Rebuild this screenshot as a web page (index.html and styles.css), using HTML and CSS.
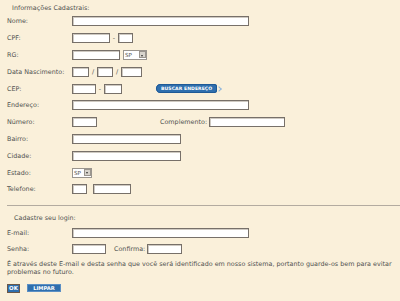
FILE: index.html
```html
<!DOCTYPE html>
<html lang="pt">
<head>
<meta charset="utf-8">
<link rel="stylesheet" href="styles.css">
</head>
<body>
<div class="page">
  <div class="section-title">Informações Cadastrais:</div>
  <div class="row"><span class="lbl">Nome:</span><span class="inp w177"></span></div>
  <div class="row"><span class="lbl">CPF:</span><span class="inp w38"></span><span class="sep">-</span><span class="inp w15"></span></div>
  <div class="row"><span class="lbl">RG:</span><span class="inp w48"></span><span class="sel sel-rg"><span class="sel-txt">SP</span><span class="sel-btn"></span></span></div>
  <div class="row"><span class="lbl">Data Nascimento:</span><span class="inp w17"></span><span class="sep">/</span><span class="inp w16"></span><span class="sep">/</span><span class="inp w21"></span></div>
  <div class="row"><span class="lbl">CEP:</span><span class="inp w24"></span><span class="sep sep-wide">-</span><span class="inp w18"></span><span class="btn-busca"><span class="btn-busca-body">BUSCAR ENDEREÇO</span><span class="btn-busca-arrow"></span></span></div>
  <div class="row"><span class="lbl">Endereço:</span><span class="inp w177"></span></div>
  <div class="row"><span class="lbl">Número:</span><span class="inp w25"></span><span class="lbl-inline lbl-compl">Complemento:</span><span class="inp w76"></span></div>
  <div class="row"><span class="lbl">Bairro:</span><span class="inp w109"></span></div>
  <div class="row"><span class="lbl">Cidade:</span><span class="inp w109"></span></div>
  <div class="row"><span class="lbl">Estado:</span><span class="sel sel-uf"><span class="sel-txt">SP</span><span class="sel-btn"></span></span></div>
  <div class="row"><span class="lbl">Telefone:</span><span class="inp w15"></span><span class="inp w38 ml6"></span></div>
  <div class="rule"></div>
  <div class="section-title login-title">Cadastre seu login:</div>
  <div class="row"><span class="lbl">E-mail:</span><span class="inp w177"></span></div>
  <div class="row"><span class="lbl">Senha:</span><span class="inp w34"></span><span class="lbl-inline lbl-conf">Confirma:</span><span class="inp w35"></span></div>
  <p class="note">É através deste E-mail e desta senha que você será identificado em nosso sistema, portanto guarde-os bem para evitar problemas no futuro.</p>
  <div class="actions"><span class="btn-ok">OK</span><span class="btn-limpar">LIMPAR</span></div>
</div>
</body>
</html>
```
FILE: styles.css
```css
html, body {
  margin: 0;
  padding: 0;
  background: #faf0da;
}
body {
  width: 400px;
  height: 301px;
  overflow: hidden;
  font-family: "DejaVu Sans", Verdana, sans-serif;
  font-size: 6.4px;
  color: #505050;
}
.page {
  padding: 3px 0 0 7px;
}
.section-title {
  padding-left: 5px;
  height: 10px;
  line-height: 10px;
}
.row {
  display: flex;
  align-items: center;
  height: 16.8px;
}
.lbl {
  width: 65px;
  flex: none;
}
.inp {
  display: inline-block;
  box-sizing: border-box;
  height: 10px;
  background: #fff;
  border: 1px solid #777069;
  box-shadow: inset 1px 1px 0 #cfcac2;
  flex: none;
}
.w177 { width: 177px; }
.w109 { width: 109px; }
.w76 { width: 76px; }
.w48 { width: 48px; }
.w38 { width: 38px; }
.w35 { width: 35px; }
.w34 { width: 34px; }
.w25 { width: 25px; }
.w24 { width: 24px; }
.w21 { width: 21px; }
.w18 { width: 18px; }
.w17 { width: 17px; }
.w16 { width: 16px; }
.w15 { width: 15px; }
.ml6 { margin-left: 6px; }
.sep {
  width: 8px;
  text-align: center;
  flex: none;
}
.sep-wide { width: 8px; }
.sel {
  display: inline-flex;
  align-items: center;
  box-sizing: border-box;
  height: 10px;
  background: #fff;
  border: 1px solid #9a958e;
  flex: none;
}
.sel-rg { width: 24px; margin-left: 3px; }
.sel-uf { width: 20px; }
.sel-txt {
  flex: 1;
  padding-left: 1px;
  font-size: 5.6px;
  line-height: 8px;
}
.sel-btn {
  width: 7px;
  height: 7px;
  margin-right: 0.5px;
  background: #d8d4cc;
  border: 0.5px solid #9a958e;
  box-sizing: border-box;
  position: relative;
}
.sel-btn::after {
  content: "";
  position: absolute;
  left: 1.5px;
  top: 2.2px;
  border-left: 1.6px solid transparent;
  border-right: 1.6px solid transparent;
  border-top: 2px solid #333;
}
.btn-busca {
  display: inline-flex;
  align-items: center;
  margin-left: 34px;
  height: 10px;
}
.btn-busca-body {
  display: inline-block;
  height: 9px;
  line-height: 9px;
  padding: 0 5px 0 5px;
  background: #2f6fae;
  border-radius: 5px 3px 3px 5px;
  color: #fff;
  font-size: 4.6px;
  font-weight: bold;
  letter-spacing: 0.05px;
  box-shadow: inset 0 0 0 1px #1f5a96;
}
.btn-busca-arrow {
  width: 3px;
  height: 3px;
  margin-left: 0;
  border-top: 1.5px solid #8fb6dd;
  border-right: 1.5px solid #8fb6dd;
  transform: rotate(45deg);
}
.lbl-inline { flex: none; }
.lbl-compl { margin-left: 63px; margin-right: 2px; }
.lbl-conf { margin-left: 8px; margin-right: 2px; }
.rule {
  height: 1px;
  background: #b3aba0;
  margin-top: 7px;
  margin-bottom: 7px;
}
.login-title {
  padding-left: 7px;
  margin-bottom: 1.5px;
}
.note {
  margin: 0;
  line-height: 8px;
  padding-top: 2.5px;
  padding-right: 2px;
}
.actions {
  display: flex;
  align-items: flex-start;
  gap: 7px;
  margin-top: 8px;
}
.btn-ok {
  display: inline-block;
  box-sizing: border-box;
  width: 13px;
  height: 9px;
  line-height: 7px;
  text-align: center;
  background: #2f6fae;
  border: 1px solid #6b5848;
  color: #fff;
  font-size: 5.4px;
  font-weight: bold;
}
.btn-limpar {
  display: inline-block;
  box-sizing: border-box;
  width: 34px;
  height: 8px;
  line-height: 6px;
  text-align: center;
  background: #2f6fae;
  border: 1px solid #5b8fc4;
  color: #fff;
  font-size: 5.2px;
  font-weight: bold;
}
```
